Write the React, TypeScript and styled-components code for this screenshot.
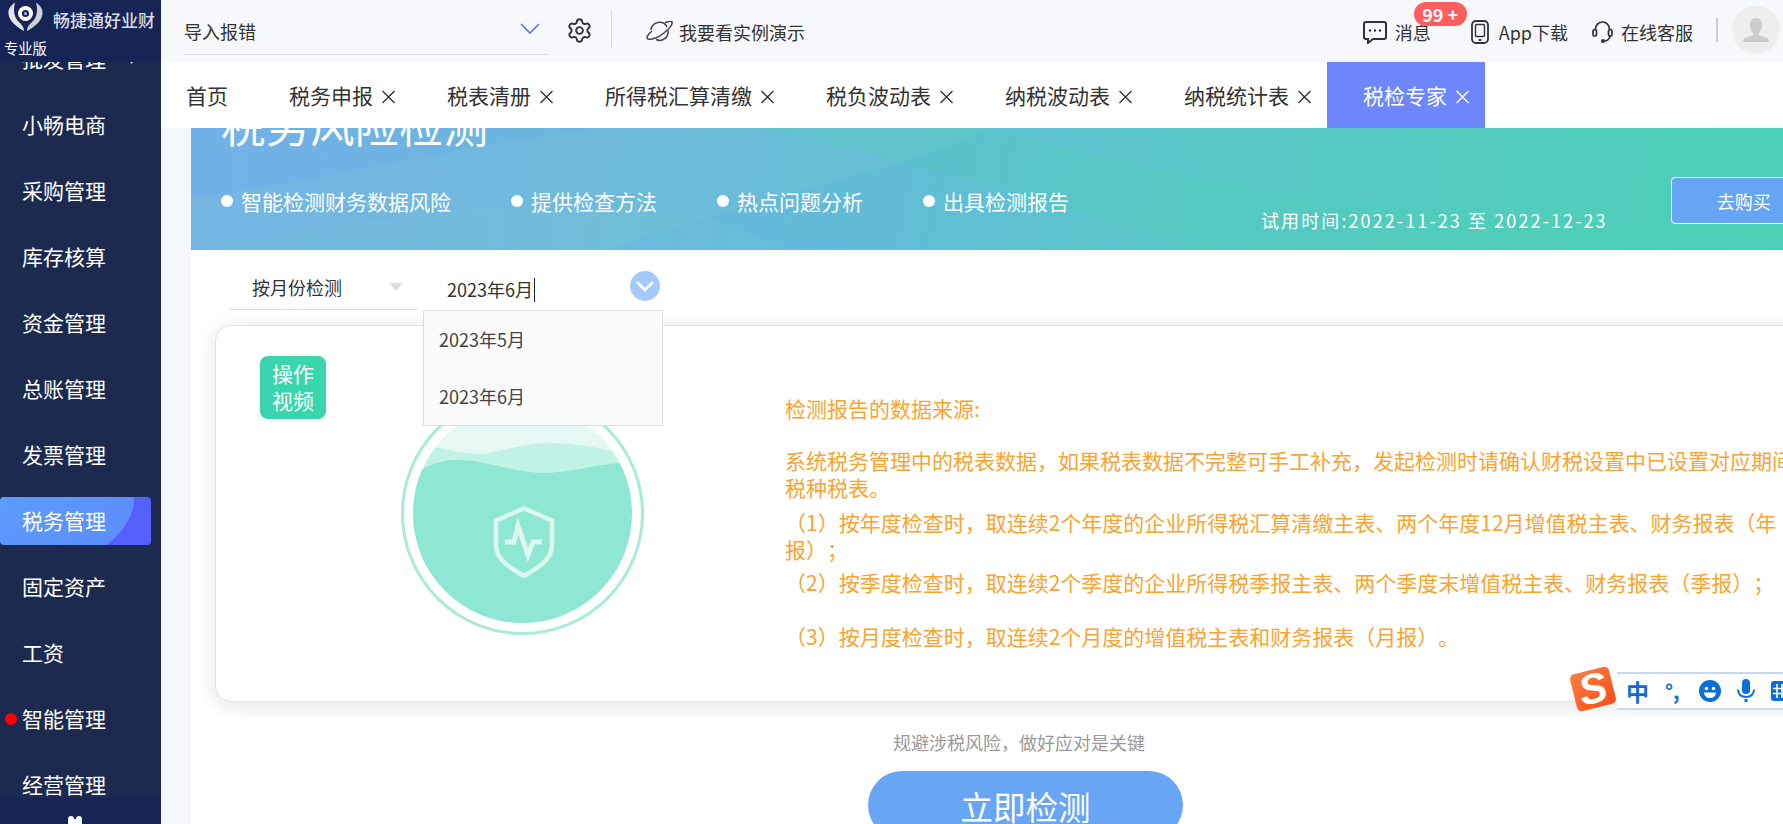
import React from "react";
import styled, { createGlobalStyle } from "styled-components";
import { Settings } from "lucide-react";

const Global = createGlobalStyle`
  html, body { margin: 0; padding: 0; height: 100%; overflow: hidden; background: #fff; }
  #root { height: 100%; }
  * { box-sizing: border-box; }
  body { font-family: "Noto Sans CJK SC", "Noto Sans", sans-serif; color: #333; text-spacing-trim: space-all; }
`;

const Shell = styled.div`
  display: flex;
  height: 824px;
  width: 1783px;
  overflow: hidden;
  position: relative;
`;

/* ---------- sidebar ---------- */
const Sidebar = styled.aside`
  width: 161px;
  flex-shrink: 0;
  display: flex;
  flex-direction: column;
  background: #1d2a50;
  color: #fff;
`;
const Brand = styled.div`
  height: 62px;
  flex-shrink: 0;
  background: #162456;
  padding: 2px 0 0 4px;
  position: relative;
  z-index: 2;
`;
const BrandRow = styled.div`
  display: flex;
  align-items: flex-start;
  height: 29px;
  padding-left: 4px;
`;
const BrandName = styled.div`
  margin: 6px 0 0 10px;
  font-size: 17px;
  line-height: 24px;
  font-weight: 500;
  color: #d9dbe3;
  white-space: nowrap;
`;
const Edition = styled.div`
  font-size: 14.3px;
  line-height: 20px;
  margin-top: 7px;
  white-space: nowrap;
`;
const Menu = styled.nav`
  flex: 1;
  min-height: 0;
  overflow: hidden;
  display: flex;
  flex-direction: column;
  gap: 18px;
  padding-right: 10px;
  margin-top: -27px;
`;
const MenuItem = styled.div<{ $active?: boolean }>`
  height: 48px;
  flex-shrink: 0;
  display: flex;
  align-items: center;
  padding: 0 0 2px 22px;
  font-size: 21px;
  white-space: nowrap;
  position: relative;
  border-radius: 4px;
  background: ${(p) =>
    p.$active
      ? "radial-gradient(ellipse 135px 79px at 0 0, #5c9cff 0, #5c8ffc 99%, #5460fc 100%)"
      : "transparent"};
`;
const Caret = styled.span`
  position: absolute;
  left: 129px;
  top: 19px;
  font-size: 10px;
  line-height: 12px;
`;
const RedDot = styled.span`
  position: absolute;
  left: 5px;
  top: 18px;
  width: 12px;
  height: 12px;
  border-radius: 50%;
  background: #ff0000;
`;
const SideFoot = styled.div`
  height: 26px;
  flex-shrink: 0;
  background: #162456;
  display: flex;
  justify-content: center;
  padding: 18px 11px 0 0;
  position: relative;
  z-index: 2;
  overflow: hidden;
`;

/* ---------- right column ---------- */
const Column = styled.div`
  flex: 1;
  min-width: 0;
  display: flex;
  flex-direction: column;
  background: #f5f7fc;
`;
const TopBar = styled.header`
  height: 62px;
  flex-shrink: 0;
  display: flex;
  align-items: flex-start;
  background: #f7f8fc;
  padding-left: 23px;
  font-size: 18px;
  color: #333;
`;
const CompanySelect = styled.div`
  width: 364px;
  height: 55px;
  border-bottom: 1px solid #dcdcdc;
  padding-top: 18px;
  display: flex;
  justify-content: space-between;
  line-height: 27px;
`;
const Chevron = styled.svg`
  margin: 5px 8px 0 0;
`;
const GearWrap = styled.div`
  margin: 17px 0 0 18px;
  width: 26px;
  height: 26px;
  color: #333;
`;
const VRule = styled.div`
  width: 1px;
  height: 37px;
  margin: 10px 33px 0 19px;
  background: #dcdcdc;
`;
const Demo = styled.div`
  display: flex;
  align-items: center;
  gap: 5px;
  height: 27px;
  margin-top: 18px;
  white-space: nowrap;
`;
const RightTools = styled.div`
  margin-left: auto;
  display: flex;
  align-items: flex-start;
  padding-right: 3px;
`;
const Tool = styled.div<{ $left: number; $gap: number }>`
  display: flex;
  align-items: center;
  height: 27px;
  margin-top: 18px;
  margin-left: ${(p) => p.$left}px;
  gap: ${(p) => p.$gap}px;
  white-space: nowrap;
  position: relative;
`;
const Badge = styled.span`
  position: absolute;
  left: 51px;
  top: -16px;
  width: 53px;
  height: 24px;
  border-radius: 12px;
  background: #ff5e5e;
  color: #fff;
  font-size: 18px;
  font-weight: 700;
  line-height: 24px;
  text-align: center;
`;
const RightRule = styled.div`
  width: 2px;
  height: 24px;
  margin: 18px 14px 0 23px;
  background: #ccc;
`;
const Avatar = styled.div`
  width: 48px;
  height: 48px;
  margin-top: 6px;
  border-radius: 50%;
  background: #eeeeee;
  display: flex;
  align-items: center;
  justify-content: center;
`;

const TabBar = styled.div`
  height: 66px;
  flex-shrink: 0;
  display: flex;
  background: #fff;
  font-size: 21px;
  position: relative;
  z-index: 1;
`;
const Tab = styled.div<{ $active?: boolean; $home?: boolean }>`
  height: 66px;
  display: flex;
  align-items: center;
  white-space: nowrap;
  padding: ${(p) => (p.$home ? "0 25px 0 25px" : "0 14px 0 36px")};
  background: ${(p) => (p.$active ? "#6e87ff" : "transparent")};
  color: ${(p) => (p.$active ? "#fff" : "#333")};
`;
const CloseGlyph = styled.svg`
  margin: 2px 1px 0 8px;
`;

const Body = styled.div`
  flex: 1;
  min-height: 0;
  margin-left: 30px;
  background: #fff;
  display: flex;
  flex-direction: column;
  overflow: hidden;
`;
const Banner = styled.section`
  height: 122px;
  flex-shrink: 0;
  position: relative;
  overflow: hidden;
  padding-left: 30px;
  color: #fff;
  background: linear-gradient(100deg, #72b1e8 0%, #6cb5e0 22%, #62bcd8 42%, #5ac6c9 62%, #52ccbd 82%, #4cd0b7 100%);
`;
const BannerArt = styled.svg`
  position: absolute;
  left: 0;
  top: 0;
  width: 100%;
  height: 100%;
`;
const BannerTitle = styled.h1`
  position: relative;
  margin: -26px 0 0;
  font-size: 44.5px;
  line-height: 44px;
  font-weight: 400;
  white-space: nowrap;
`;
const BannerRow = styled.div`
  position: relative;
  display: flex;
  align-items: flex-start;
  margin-top: 31px;
  white-space: nowrap;
`;
const Feature = styled.div`
  display: flex;
  align-items: center;
  gap: 8px;
  margin: 9px 60px 0 0;
  font-size: 21px;
  line-height: 30px;
  &::before {
    content: "";
    width: 12px;
    height: 12px;
    border-radius: 50%;
    background: #fff;
  }
`;
const Trial = styled.div`
  margin: 30px 0 0 132px;
  font-size: 18px;
  line-height: 26px;
  letter-spacing: 2.1px;
`;
const BuyButton = styled.button`
  width: 146px;
  height: 47px;
  margin-left: 63px;
  flex-shrink: 0;
  border: 1px solid #fff;
  border-radius: 4px;
  background: #66a5f5;
  color: #fff;
  font: inherit;
  font-size: 18px;
`;

const FilterRow = styled.div`
  height: 60px;
  flex-shrink: 0;
  display: flex;
  padding-left: 38px;
  position: relative;
  z-index: 3;
  font-size: 18px;
`;
const ModeSelect = styled.div`
  width: 188px;
  height: 60px;
  border-bottom: 1px solid #ddd;
  padding: 24px 14px 0 23px;
  line-height: 27px;
  display: flex;
  justify-content: space-between;
`;
const Tri = styled.span`
  width: 0;
  height: 0;
  margin-top: 9px;
  border-left: 7px solid transparent;
  border-right: 7px solid transparent;
  border-top: 8px solid #dddddd;
`;
const DateField = styled.div`
  width: 240px;
  margin-left: 6px;
  position: relative;
  padding: 26px 0 0 24px;
  line-height: 27px;
  display: flex;
  align-items: flex-start;
`;
const Caret2 = styled.span`
  width: 1px;
  height: 24px;
  margin: 2px 0 0 1px;
  background: #222;
`;
const DateIcon = styled.div`
  position: absolute;
  left: 207px;
  top: 21px;
  width: 30px;
  height: 30px;
  border-radius: 50%;
  background: #a6c9fb;
  display: flex;
  align-items: center;
  justify-content: center;
`;
const Dropdown = styled.ul`
  position: absolute;
  left: 0;
  top: 60px;
  width: 240px;
  height: 116px;
  margin: 0;
  padding: 0;
  list-style: none;
  background: #fbfbfb;
  border: 1px solid #ddd;
`;
const Option = styled.li`
  height: 57px;
  padding-left: 15px;
  display: flex;
  align-items: center;
  color: #444;
`;

const CardClip = styled.div`
  height: 407px;
  flex-shrink: 0;
  overflow: hidden;
  padding: 15px 0 0 24px;
`;
const Card = styled.article`
  width: 1800px;
  height: 377px;
  background: #fff;
  border: 1px solid #e2e2e2;
  border-radius: 16px;
  box-shadow: 0 4px 22px rgba(0, 0, 0, 0.11);
  display: flex;
  align-items: flex-start;
`;
const VideoTag = styled.div`
  width: 66px;
  height: 63px;
  margin: 30px 0 0 44px;
  flex-shrink: 0;
  border-radius: 8px;
  background: #39d6ad;
  color: #fff;
  font-size: 21px;
  line-height: 27px;
  padding: 4px 0;
  text-align: center;
`;
const Globe = styled.svg`
  margin: 66px 0 0 75px;
  flex-shrink: 0;
`;
const Notes = styled.div`
  margin: 69px 0 0 141px;
  color: #f9a430;
  font-size: 21px;
  line-height: 27px;
  white-space: nowrap;
`;
const Note = styled.p<{ $after: number }>`
  margin: 0 0 ${(p) => p.$after}px;
`;

const Foot = styled.div`
  position: relative;
  flex: 1;
  display: flex;
  flex-direction: column;
  align-items: flex-start;
`;
const Hint = styled.div`
  margin: 12px 0 0 702px;
  font-size: 18px;
  line-height: 26px;
  color: #999;
  white-space: nowrap;
`;
const Start = styled.button`
  width: 315px;
  height: 68px;
  margin: 16px 0 0 677px;
  flex-shrink: 0;
  border: 0;
  border-radius: 34px;
  background: #68a6f5;
  color: #fff;
  font: inherit;
  font-size: 32.5px;
`;
const Speck = styled.span<{ $x: number; $c: string; $w: number }>`
  position: absolute;
  left: ${(p) => p.$x}px;
  bottom: 0;
  width: ${(p) => p.$w}px;
  height: 2px;
  border-radius: 2px 2px 0 0;
  background: ${(p) => p.$c};
`;

/* ---------- floating input method bar ---------- */
const Ime = styled.div`
  position: absolute;
  left: 1617px;
  top: 672px;
  width: 166px;
  height: 38px;
  background: #fff;
  border-top: 2px solid #c9d8ea;
  border-bottom: 2px solid #c9d8ea;
  display: flex;
  align-items: center;
  color: #0a6fd8;
  z-index: 5;
  overflow: hidden;
`;
const ImeLogo = styled.div`
  position: absolute;
  left: 1573px;
  top: 670px;
  width: 40px;
  height: 38px;
  border-radius: 5px;
  transform: rotate(-14deg);
  background: linear-gradient(150deg, #ff7d3f, #f4501a);
  color: #fff;
  font-family: "Liberation Sans", sans-serif;
  font-size: 42px;
  font-weight: 700;
  font-style: italic;
  line-height: 38px;
  text-align: center;
  z-index: 6;
`;
const ImeZh = styled.span`
  margin-left: 9px;
  width: 24px;
  flex-shrink: 0;
  font-size: 23px;
  font-weight: 700;
  line-height: 30px;
`;
const ImePunct = styled.span`
  margin: 0 14px 0 15px;
  width: 20px;
  flex-shrink: 0;
  font-size: 20px;
  font-weight: 700;
  line-height: 30px;
  white-space: nowrap;
`;
const ImeIcon = styled.svg`
  flex-shrink: 0;
  margin-right: 16px;
`;

const LogoMark = () => (
  <svg width="35" height="29" viewBox="0 0 35 29" fill="none">
    <path d="M7 .5C2 4 0 8 .5 12 1 19 9 25 16 29 16 24 12 21 10 19 6 15 5 8 7 .5Z" fill="#e3e4e9" />
    <path d="M28 .5C33 4 35 8 34.500 12 34 19 26 25 19 29 19 24 23 21 25 19 29 15 30 8 28 .5Z" fill="#cfd1d9" />
    <circle cx="17.5" cy="11.5" r="7.500" fill="#fff" />
    <circle cx="17.5" cy="11.5" r="3.600" fill="#162456" />
    <circle cx="17.5" cy="11.5" r="1.500" fill="#b9bcc8" />
  </svg>
);
const Close = () => (
  <CloseGlyph width="15" height="15" viewBox="0 0 15 15" fill="none" stroke="currentColor" strokeWidth="1.4">
    <path d="M1.5 2 13.5 14M13.5 2 1.5 14" />
  </CloseGlyph>
);

const sideItems = ["小畅电商", "采购管理", "库存核算", "资金管理", "总账管理", "发票管理", "税务管理", "固定资产", "工资", "智能管理", "经营管理"];
const tabs = ["税务申报", "税表清册", "所得税汇算清缴", "税负波动表", "纳税波动表", "纳税统计表", "税检专家"];
const features = ["智能检测财务数据风险", "提供检查方法", "热点问题分析", "出具检测报告"];

export default function App() {
  return (
    <Shell>
      <Global />
      <Sidebar>
        <Brand>
          <BrandRow>
            <LogoMark />
            <BrandName>畅捷通好业财</BrandName>
          </BrandRow>
          <Edition>专业版</Edition>
        </Brand>
        <Menu>
          <MenuItem>
            批发管理
            <Caret>▾</Caret>
          </MenuItem>
          {sideItems.map((s) => (
            <MenuItem key={s} $active={s === "税务管理"}>
              {s === "智能管理" && <RedDot />}
              {s}
            </MenuItem>
          ))}
        </Menu>
        <SideFoot>
          <svg width="16" height="12" viewBox="0 0 16 12" fill="#fff">
            <circle cx="4" cy="3" r="3" />
            <circle cx="12" cy="3" r="3" />
            <rect x="1" y="3" width="14" height="9" rx="2" />
          </svg>
        </SideFoot>
      </Sidebar>

      <Column>
        <TopBar>
          <CompanySelect>
            导入报错
            <Chevron width="20" height="11" viewBox="0 0 20 11" fill="none" stroke="#5a6cf0" strokeWidth="1.6">
              <path d="M1 1l9 9 9-9" />
            </Chevron>
          </CompanySelect>
          <GearWrap>
            <Settings size={27} strokeWidth={1.7} />
          </GearWrap>
          <VRule />
          <Demo>
            <svg width="29" height="22" viewBox="0 0 29 22" fill="none" stroke="#444" strokeWidth="1.5">
              <path d="M6 9a8.5 8.5 0 0 1 16-3" />
              <path d="M23 9.5A8.5 8.5 0 0 1 11 18.5" />
              <path d="M7 10C2 14 1 17 3 18c3 1 10-1 16-6s9-9 8-11c-1-1-4-1-7 1" />
            </svg>
            我要看实例演示
          </Demo>
          <RightTools>
            <Tool $left={0} $gap={8}>
              <svg width="24" height="24" viewBox="0 0 24 24" fill="none" stroke="#333" strokeWidth="2">
                <path d="M3 2h18a2 2 0 0 1 2 2v13a2 2 0 0 1-2 2H10l-5 4v-4H3a2 2 0 0 1-2-2V4a2 2 0 0 1 2-2Z" />
                <circle cx="7" cy="10.5" r="1.2" fill="#333" stroke="none" />
                <circle cx="12" cy="10.5" r="1.2" fill="#333" stroke="none" />
                <circle cx="17" cy="10.5" r="1.2" fill="#333" stroke="none" />
              </svg>
              消息
              <Badge>99 +</Badge>
            </Tool>
            <Tool $left={40} $gap={10}>
              <svg width="18" height="24" viewBox="0 0 18 24" fill="none" stroke="#333" strokeWidth="1.8">
                <rect x="1" y="1" width="16" height="22" rx="4" />
                <rect x="4.5" y="4.5" width="9" height="12" rx="1" strokeWidth="1.4" />
                <path d="M7.5 20h3" />
              </svg>
              App下载
            </Tool>
            <Tool $left={24} $gap={8}>
              <svg width="21" height="22" viewBox="0 0 21 22" fill="none" stroke="#333" strokeWidth="1.7">
                <path d="M3.5 9V8a7 7 0 0 1 14 0v1" />
                <rect x="1" y="8.5" width="3.5" height="6.5" rx="1.7" />
                <rect x="16.5" y="8.5" width="3.5" height="6.5" rx="1.7" />
                <path d="M18 15c0 3-3 5-6 5" />
                <circle cx="11" cy="20" r="1.2" />
              </svg>
              在线客服
            </Tool>
            <RightRule />
            <Avatar>
              <svg width="26" height="26" viewBox="0 0 26 26" fill="#cccccc">
                <path d="M13 1c4 0 6 3 6 7 0 3-1 6-3 8v2l8 3c1 .5 2 2 2 4H0c0-2 1-3.500 2-4l8-3v-2c-2-2-3-5-3-8 0-4 2-7 6-7Z" />
              </svg>
            </Avatar>
          </RightTools>
        </TopBar>

        <TabBar>
          <Tab $home>首页</Tab>
          {tabs.map((t) => (
            <Tab key={t} $active={t === "税检专家"}>
              {t}
              <Close />
            </Tab>
          ))}
        </TabBar>

        <Body>
          <Banner>
            <BannerArt viewBox="0 0 1592 122" preserveAspectRatio="none">
              <path d="M0 70 C150 50 300 10 420 0 L800 0 C720 40 560 70 420 122 L0 122Z" fill="#8fd3cf" opacity=".14" />
              <path d="M560 0 C760 40 900 90 1010 122 L1592 122 L1592 90 C1300 110 1000 60 800 0Z" fill="#49d2b0" opacity=".2" />
              <path d="M0 122 C200 90 330 60 520 90 L600 122Z" fill="#7dd0d5" opacity=".16" />
            </BannerArt>
            <BannerTitle>税务风险检测</BannerTitle>
            <BannerRow>
              {features.map((f) => (
                <Feature key={f}>{f}</Feature>
              ))}
              <Trial>试用时间:2022-11-23 至 2022-12-23</Trial>
              <BuyButton>去购买</BuyButton>
            </BannerRow>
          </Banner>

          <FilterRow>
            <ModeSelect>
              按月份检测
              <Tri />
            </ModeSelect>
            <DateField>
              2023年6月
              <Caret2 />
              <DateIcon>
                <svg width="20" height="12" viewBox="0 0 20 12" fill="none" stroke="#fff" strokeWidth="2.6">
                  <path d="M2 2l8 8 8-8" />
                </svg>
              </DateIcon>
              <Dropdown>
                <Option>2023年5月</Option>
                <Option>2023年6月</Option>
              </Dropdown>
            </DateField>
          </FilterRow>

          <CardClip>
            <Card>
              <VideoTag>
                操作
                <br />
                视频
              </VideoTag>
              <Globe width="243" height="243" viewBox="0 0 243 243" fill="none">
                <defs>
                  <clipPath id="globe-inner">
                    <circle cx="121.500" cy="121.500" r="109.500" />
                  </clipPath>
                </defs>
                <circle cx="121.500" cy="121.500" r="120" stroke="#a9ebdb" strokeWidth="3" />
                <g clipPath="url(#globe-inner)">
                  <rect width="243" height="243" fill="#e6f8f4" />
                  <path d="M20 50 35 55C55 60 70 62 82 62 105 58 130 50 152 51 175 52 195 55 211 59L240 100 0 100Z" fill="#c1f2e6" />
                  <path d="M0 85 21 77C35 70 50 67 61 68 90 70 115 81 146 81 170 80 195 73 217 71L243 75V243H0Z" fill="#8de7d2" />
                  <path d="M123 116.500 151 128.500V154C151 168 135 177 123 184 111 177 95 168 95 154V128.500Z" stroke="#dcf7f0" strokeWidth="4.500" />
                  <path d="M104 150H113L117 134 127 163 132 150H141" stroke="#dcf7f0" strokeWidth="5" />
                </g>
              </Globe>
              <Notes>
                <Note $after={25}>检测报告的数据来源:</Note>
                <Note $after={8}>
                  系统税务管理中的税表数据，如果税表数据不完整可手工补充，发起检测时请确认财税设置中已设置对应期间的
                  <br />
                  税种税表。
                </Note>
                <Note $after={6}>
                  （1）按年度检查时，取连续2个年度的企业所得税汇算清缴主表、两个年度12月增值税主表、财务报表（年
                  <br />
                  报）；
                </Note>
                <Note $after={27}>（2）按季度检查时，取连续2个季度的企业所得税季报主表、两个季度末增值税主表、财务报表（季报）；</Note>
                <Note $after={0}>（3）按月度检查时，取连续2个月度的增值税主表和财务报表（月报）。</Note>
              </Notes>
            </Card>
          </CardClip>

          <Foot>
            <Hint>规避涉税风险，做好应对是关键</Hint>
            <Start>立即检测</Start>
            <Speck $x={1050} $c="#c9c9c9" $w={3} />
            <Speck $x={1073} $c="#f6a58e" $w={9} />
          </Foot>
        </Body>
      </Column>

      <Ime>
        <ImeZh>中</ImeZh>
        <ImePunct>°,</ImePunct>
        <ImeIcon width="22" height="22" viewBox="0 0 22 22">
          <circle cx="11" cy="11" r="11" fill="#0a6fd8" />
          <circle cx="7.500" cy="8.500" r="1.800" fill="#fff" />
          <circle cx="14.500" cy="8.500" r="1.800" fill="#fff" />
          <path d="M5 12.500h12c0 3.500-2.800 5.500-6 5.500s-6-2-6-5.500Z" fill="#fff" />
        </ImeIcon>
        <ImeIcon width="18" height="24" viewBox="0 0 18 24" fill="none">
          <rect x="5" y="0" width="8" height="15" rx="4" fill="#0a6fd8" />
          <path d="M1 10.500c0 5 3.500 7.500 8 7.500s8-2.500 8-7.500" stroke="#0a6fd8" strokeWidth="2" />
          <rect x="7.500" y="20" width="3" height="3" fill="#0a6fd8" />
        </ImeIcon>
        <ImeIcon width="18" height="20" viewBox="0 0 18 20">
          <rect width="18" height="20" rx="3" fill="#0a6fd8" />
          <path d="M6 3v14M11 3v14M2 7.500h14M2 12.500h14" stroke="#fff" strokeWidth="1.600" />
        </ImeIcon>
      </Ime>
      <ImeLogo>S</ImeLogo>
    </Shell>
  );
}
